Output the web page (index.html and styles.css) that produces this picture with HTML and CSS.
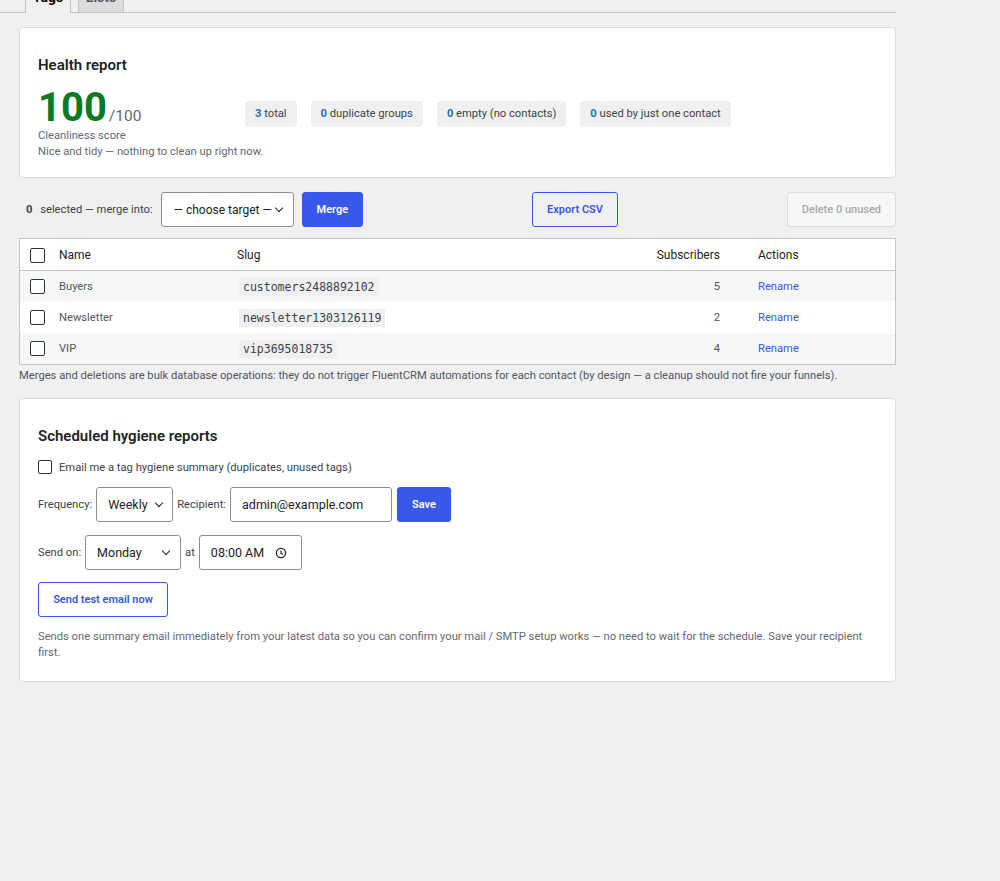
FILE: index.html
```html
<!DOCTYPE html>
<html>
<head>
    <link rel="stylesheet" href="styles.css">
</head>
<body>
    <div class="wrap">
        <!-- 标签页切换 -->
        <nav class="tab-bar">
            <a class="tab active">Tags</a>
            <a class="tab">Lists</a>
        </nav>

        <!-- 健康报告 -->
        <section class="card health">
            <h2>Health report</h2>
            <div class="score-row">
                <div class="score">
                    <div class="score-line"><span class="score-num">100</span><span class="score-max">/100</span></div>
                    <div class="muted">Cleanliness score</div>
                </div>
                <div class="chips">
                    <span class="chip"><b>3</b> total</span>
                    <span class="chip"><b>0</b> duplicate groups</span>
                    <span class="chip"><b>0</b> empty (no contacts)</span>
                    <span class="chip"><b>0</b> used by just one contact</span>
                </div>
            </div>
            <p class="muted">Nice and tidy — nothing to clean up right now.</p>
        </section>

        <!-- 批量操作 -->
        <div class="toolbar">
            <div class="merge-group">
                <span class="sel-count"><b>0</b> selected — merge into:</span>
                <div class="select target">— choose target — <span class="chev"></span></div>
                <button class="btn primary">Merge</button>
            </div>
            <button class="btn outline">Export CSV</button>
            <button class="btn disabled">Delete 0 unused</button>
        </div>

        <table class="tag-table">
            <thead>
                <tr>
                    <th class="col-check"><span class="box"></span></th>
                    <th class="col-name">Name</th>
                    <th>Slug</th>
                    <th class="col-subs">Subscribers</th>
                    <th class="col-actions">Actions</th>
                </tr>
            </thead>
            <tbody id="rows"></tbody>
        </table>
        <p class="note">Merges and deletions are bulk database operations: they do not trigger FluentCRM automations for each contact (by design — a cleanup should not fire your funnels).</p>

        <!-- 定时报告 -->
        <section class="card schedule">
            <h2>Scheduled hygiene reports</h2>
            <label class="check-line"><span class="box"></span>Email me a tag hygiene summary (duplicates, unused tags)</label>
            <div class="form-row">
                <span class="lbl">Frequency:</span>
                <div class="select freq">Weekly <span class="chev"></span></div>
                <span class="lbl">Recipient:</span>
                <div class="input email">admin@example.com</div>
                <button class="btn primary">Save</button>
            </div>
            <div class="form-row">
                <span class="lbl">Send on:</span>
                <div class="select day">Monday <span class="chev"></span></div>
                <span class="lbl">at</span>
                <div class="input time">08:00 AM
                    <svg width="12" height="12" viewBox="0 0 12 12"><circle cx="6" cy="6" r="4.6" fill="none" stroke="#1d2327" stroke-width="1.3"/><path d="M6 3.4V6.2L7.8 7.4" fill="none" stroke="#1d2327" stroke-width="1.2"/></svg>
                </div>
            </div>
            <button class="btn outline test-btn">Send test email now</button>
            <p class="muted desc">Sends one summary email immediately from your latest data so you can confirm your mail / SMTP setup works — no need to wait for the schedule. Save your recipient first.</p>
        </section>
    </div>

    <script>
        const tags = [
            { name: "Buyers", slug: "customers2488892102", subs: 5 },
            { name: "Newsletter", slug: "newsletter1303126119", subs: 2 },
            { name: "VIP", slug: "vip3695018735", subs: 4 }
        ];

        document.getElementById('rows').innerHTML = tags.map(t => `
            <tr>
                <td class="col-check"><span class="box"></span></td>
                <td>${t.name}</td>
                <td><code>${t.slug}</code></td>
                <td class="col-subs">${t.subs}</td>
                <td><a class="link">Rename</a></td>
            </tr>`).join('');
    </script>
</body>
</html>
```

FILE: styles.css
```css
body {
    margin: 0;
    background: #f0f0f1;
    font-family: Roboto, "Noto Sans", sans-serif;
    font-size: 11.2px;
    color: #1d2327;
}

.wrap {
    width: 877px;
    padding-left: 19px;
    margin-top: -23px;
}

/* 标签页 */
.tab-bar {
    display: flex;
    gap: 7px;
    margin-left: -19px;
    padding-left: 25px;
    border-bottom: 1px solid #c3c4c7;
}

.tab {
    width: 44px;
    padding: 9px 0 5px;
    border: 1px solid #c3c4c7;
    border-bottom: none;
    background: #dcdcde;
    font-weight: 600;
    font-size: 14px;
    text-align: center;
    line-height: 20px;
    color: #50575e;
}

.tab.active {
    background: #f0f0f1;
    color: #000;
    margin-bottom: -1px;
    padding-bottom: 6px;
}

/* 卡片 */
.card {
    background: #fff;
    border: 1px solid #dcdcde;
    border-radius: 4px;
    margin-top: 14px;
    padding: 18px 18px 20px;
}

.card h2 {
    margin: 9px 0 0;
    font-size: 15px;
    font-weight: 600;
    line-height: 20px;
}

.health {
    padding-bottom: 17px;
}

.muted {
    color: #646970;
    font-size: 11.2px;
    margin: 0;
    line-height: 16px;
}

.score-row {
    display: flex;
    align-items: center;
    margin-top: 9px;
}

.score {
    width: 207px;
}

.score-line {
    height: 44px;
    line-height: 48px;
}

.score-num {
    font-size: 40px;
    font-weight: 700;
    color: #0b7a24;
}

.score-max {
    font-size: 15.5px;
    color: #646970;
    margin-left: 2px;
}

.chips {
    display: flex;
    gap: 14px;
}

.chip {
    background: #f0f0f1;
    border-radius: 3px;
    padding: 0 10px;
    height: 26px;
    line-height: 26px;
    font-size: 11.2px;
    color: #3c434a;
}

.chip b {
    color: #2271b1;
    font-weight: 700;
}

/* 批量操作栏 */
.toolbar {
    display: flex;
    justify-content: space-between;
    align-items: center;
    margin-top: 14px;
    padding-left: 7px;
}

.merge-group {
    display: flex;
    align-items: center;
    gap: 8px;
}

.sel-count {
    color: #3c434a;
}

.sel-count b {
    margin-right: 5px;
}

.select, .input {
    box-sizing: border-box;
    height: 35px;
    border: 1px solid #8c8f94;
    border-radius: 3px;
    background: #fff;
    display: flex;
    align-items: center;
    font-size: 12.5px;
    color: #1d2327;
    white-space: nowrap;
}

.target {
    width: 133px;
    padding: 0 11px 0 12px;
    justify-content: space-between;
    font-size: 12px;
}

.chev {
    width: 5px;
    height: 5px;
    border-right: 1.5px solid #1d2327;
    border-bottom: 1.5px solid #1d2327;
    transform: rotate(45deg);
    margin-top: -3px;
}

.btn {
    box-sizing: border-box;
    height: 35px;
    padding: 0 14px;
    border-radius: 3px;
    font-family: inherit;
    font-size: 11px;
    font-weight: 600;
    cursor: pointer;
}

.btn.primary {
    background: #3858e9;
    border: 1px solid #3858e9;
    color: #fff;
}

.btn.outline {
    background: transparent;
    border: 1px solid #3858e9;
    color: #3858e9;
}

.btn.disabled {
    background: #f6f7f7;
    border: 1px solid #dcdcde;
    color: #a7aaad;
    font-weight: 500;
}

/* 标签表格 */
.tag-table {
    width: 100%;
    margin-top: 11px;
    border-collapse: collapse;
    border: 1px solid #c3c4c7;
    background: #fff;
    font-size: 11.2px;
    color: #50575e;
}

.tag-table th {
    text-align: left;
    font-weight: 400;
    font-size: 12px;
    color: #1d2327;
    height: 31px;
    padding: 0 10px;
    border-bottom: 1px solid #c3c4c7;
}

.tag-table td {
    height: 31px;
    padding: 0 10px;
}

.tag-table tbody tr:nth-child(odd) {
    background: #f6f7f7;
}

.tag-table th.col-check, .tag-table td.col-check {
    padding: 0 0 0 10px;
    width: 19px;
}

.col-name {
    width: 158px;
}

.tag-table .col-subs {
    text-align: right;
    padding-right: 28px;
    width: 70px;
}

.tag-table td.col-subs {
    color: #50575e;
}

.tag-table th.col-actions {
    width: 127px;
}

.box {
    display: inline-block;
    box-sizing: border-box;
    width: 15px;
    height: 15px;
    border: 1.5px solid #2c3338;
    border-radius: 2px;
    background: #fff;
    vertical-align: middle;
}

.tag-table thead .box {
    margin-top: 2px;
}

code {
    font-family: "DejaVu Sans Mono", monospace;
    font-size: 11.5px;
    background: #f0f0f1;
    color: #3c434a;
    padding: 2px 4px;
    margin-left: 2px;
}

.link {
    color: #3858e9;
}

.note {
    margin: 3px 0 0;
    font-size: 11.2px;
    color: #50575e;
    line-height: 16px;
}

/* 定时报告表单 */
.schedule {
    margin-top: 14px;
}

.check-line {
    display: flex;
    align-items: center;
    gap: 7px;
    margin-top: 14px;
    font-size: 11.2px;
    color: #3c434a;
}

.check-line .box {
    width: 14px;
    height: 14px;
}

.form-row {
    display: flex;
    align-items: center;
    gap: 4px;
    margin-top: 13px;
}

.form-row .lbl {
    font-size: 11.2px;
    color: #3c434a;
}

.freq {
    width: 77px;
    padding: 0 10px 0 11px;
    justify-content: space-between;
}

.email {
    width: 162px;
    padding: 0 11px;
}

.form-row .btn.primary {
    margin-left: 1px;
}

.day {
    width: 96px;
    padding: 0 11px;
    justify-content: space-between;
}

.time {
    width: 103px;
    padding: 0 14px 0 11px;
    justify-content: space-between;
}

.test-btn {
    margin-top: 12px;
    width: 130px;
    padding: 0;
}

.desc {
    margin-top: 12px;
}
```
